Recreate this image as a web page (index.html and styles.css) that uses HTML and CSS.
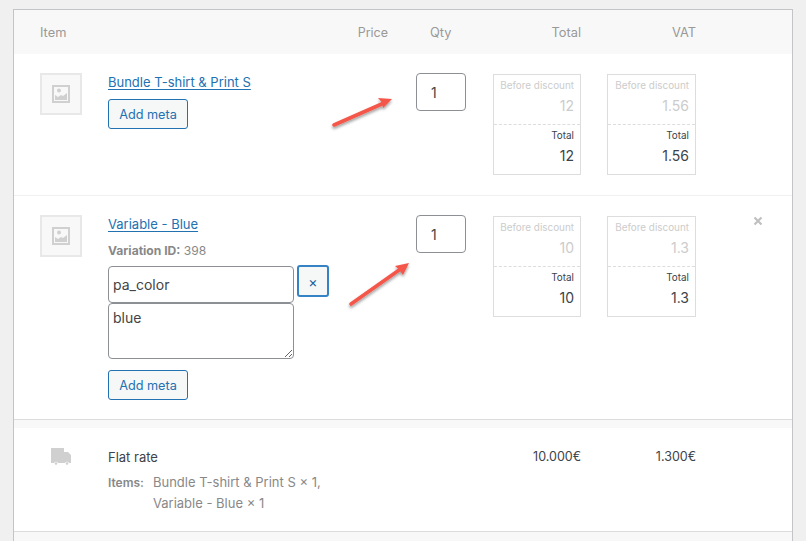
FILE: index.html
```html
<!DOCTYPE html>
<html lang="en">
<head>
<meta charset="utf-8">
<title>Order items</title>
<link rel="stylesheet" href="styles.css">
</head>
<body>
<div class="panel">
  <div class="grid head">
    <div class="col-item">Item</div>
    <div class="col-price">Price</div>
    <div class="col-qty-head">Qty</div>
    <div class="col-num">Total</div>
    <div class="col-num">VAT</div>
  </div>

  <div class="grid row row-one">
    <div class="thumb-cell"><div class="thumb"><svg class="thumb-icon" viewBox="0 0 20 20"><path fill-rule="evenodd" d="M1 1h18v18H1z M3 3v14h14V3z"/><path d="M4 16v-5l3 2 3-2 2 1 4-3v7z"/><circle cx="8" cy="6.5" r="2"/></svg></div></div>
    <div class="name-cell">
      <a class="item-link" href="#">Bundle T-shirt &amp; Print S</a>
      <button class="btn add-meta" type="button">Add meta</button>
    </div>
    <div></div>
    <div class="qty-cell"><input class="qty" type="text" value="1"></div>
    <div class="col-num">
      <div class="split">
        <div class="half muted"><span class="label">Before discount</span><span class="value">12</span></div>
        <div class="half"><span class="label">Total</span><span class="value">12</span></div>
      </div>
    </div>
    <div class="col-num">
      <div class="split split-wide">
        <div class="half muted"><span class="label">Before discount</span><span class="value">1.56</span></div>
        <div class="half"><span class="label">Total</span><span class="value">1.56</span></div>
      </div>
    </div>
  </div>

  <div class="grid row row-two">
    <div class="thumb-cell"><div class="thumb"><svg class="thumb-icon" viewBox="0 0 20 20"><path fill-rule="evenodd" d="M1 1h18v18H1z M3 3v14h14V3z"/><path d="M4 16v-5l3 2 3-2 2 1 4-3v7z"/><circle cx="8" cy="6.5" r="2"/></svg></div></div>
    <div class="name-cell">
      <a class="item-link" href="#">Variable - Blue</a>
      <div class="variation"><b>Variation ID:</b> 398</div>
      <div class="meta-row">
        <div class="meta-fields">
          <input class="meta-key" type="text" value="pa_color">
          <textarea class="meta-value">blue</textarea>
        </div>
        <button class="btn remove-meta" type="button">×</button>
      </div>
      <button class="btn add-meta add-meta-two" type="button">Add meta</button>
    </div>
    <div></div>
    <div class="qty-cell"><input class="qty" type="text" value="1"></div>
    <div class="col-num">
      <div class="split">
        <div class="half muted"><span class="label">Before discount</span><span class="value">10</span></div>
        <div class="half"><span class="label">Total</span><span class="value">10</span></div>
      </div>
    </div>
    <div class="col-num">
      <div class="split split-wide">
        <div class="half muted"><span class="label">Before discount</span><span class="value">1.3</span></div>
        <div class="half"><span class="label">Total</span><span class="value">1.3</span></div>
      </div>
    </div>
    <div class="del-cell"><svg class="del" viewBox="0 0 10 10"><path d="M1.5 1.5l7 7M8.5 1.5l-7 7"/></svg></div>
  </div>

  <div class="band"></div>

  <div class="grid row row-ship">
    <div class="truck-cell"><svg class="truck" viewBox="0 0 20 17"><path d="M0 0h13v4h4l3 3v8h-2a2.200 2.200 0 0 0-4 0H7a2.200 2.200 0 0 0-4 0H0z"/><circle cx="5" cy="15.500" r="1.300"/><circle cx="16" cy="15.500" r="1.300"/></svg></div>
    <div class="ship-cell">
      <div class="ship-name">Flat rate</div>
      <div class="ship-items"><b>Items:</b><span>Bundle T-shirt &amp; Print S × 1,<br>Variable - Blue × 1</span></div>
    </div>
    <div></div>
    <div></div>
    <div class="col-num ship-total">10.000€</div>
    <div class="col-num ship-total">1.300€</div>
  </div>

  <div class="band band-end"></div>
</div>

<svg class="arrows" viewBox="0 0 806 541">
  <defs>
    <filter id="shade" x="-30%" y="-30%" width="160%" height="180%"><feDropShadow dx="0" dy="2" stdDeviation="1.500" flood-color="#000" flood-opacity=".4"/></filter>
  </defs>
  <g filter="url(#shade)">
    <path class="arrow-line" d="M334 125L384 103"/>
    <path class="arrow-head" d="M392 99L378 98L382 102.500L383 108z"/>
    <path class="arrow-line" d="M351 304L402 268"/>
    <path class="arrow-head" d="M409 263L395 266L399 269.500L403 275z"/>
  </g>
</svg>
</body>
</html>
```

FILE: styles.css
```css
* { box-sizing: border-box; }
html, body { height: 100%; }
body {
  margin: 0;
  padding: 9px 13px 0;
  background: #f0f0f1;
  overflow: hidden;
  font-family: Inter, "Liberation Sans", sans-serif;
  font-size: 13px;
  color: #3c434a;
}
.panel {
  width: 780px;
  height: 532px;
  background: #fff;
  border: 1px solid #c3c4c7;
  border-bottom: 0;
  overflow: hidden;
}
.grid {
  display: grid;
  grid-template-columns: 94px 210px 70px 93px 100px 115px 96px;
  align-items: start;
}
.head {
  height: 44px;
  background: #f8f8f8;
  align-items: center;
  color: #999;
  font-size: 12.800px;
}
.col-item { padding-left: 26px; grid-column: 1 / 3; }
.col-price { text-align: right; font-size: 12.500px; }
.col-qty-head { padding-left: 42px; }
.col-num { text-align: right; }
.row { border-bottom: 1px solid #f0f0f1; }
.row-one { height: 142px; padding-top: 19px; }
.row-two { height: 224px; padding-top: 19px; border-bottom-color: #dcdcde; }
.row-ship { height: 104px; padding-top: 20px; border-bottom-color: #dcdcde; }
.thumb-cell { padding-left: 26px; }
.thumb {
  width: 42px;
  height: 42px;
  border: 2px solid #e8e8e8;
  background: #f8f8f8;
  display: flex;
  align-items: center;
  justify-content: center;
}
.thumb-icon { width: 20px; height: 20px; fill: #d0d0d0; }
.name-cell { grid-column: 2 / 3; display: flex; flex-direction: column; align-items: flex-start; }
.item-link { color: #2271b1; line-height: 18px; margin-bottom: 8px; white-space: nowrap; text-decoration-thickness: 1px; text-underline-offset: 2px; }
.btn {
  font-family: inherit;
  font-size: 12.700px;
  color: #2271b1;
  background: #f6f7f7;
  border: 1px solid #2271b1;
  border-radius: 3px;
  cursor: pointer;
  padding: 0;
}
.add-meta { width: 80px; height: 30px; }
.add-meta-two { margin-top: 11px; }
.variation { color: #888; font-size: 12.100px; line-height: 16px; margin-top: 2px; margin-bottom: 7px; white-space: nowrap; }
.meta-row { display: flex; gap: 3px; align-items: flex-start; }
.meta-fields { display: flex; flex-direction: column; width: 186px; }
.meta-key, .meta-value, .qty {
  font-family: inherit;
  font-size: 14px;
  color: #444;
  background: #fff;
  border: 1px solid #8c8f94;
  border-radius: 4px;
  outline: 0;
  margin: 0;
}
.meta-key { height: 37px; padding: 0 4px; width: 100%; }
.meta-value { height: 56px; padding: 5px 4px; width: 100%; display: block; resize: vertical; }
.remove-meta { width: 32px; height: 32px; margin-top: -1px; border: 2px solid #3582c4; color: #135e96; font-size: 14px; }
.qty-cell { padding-left: 28px; }
.qty { width: 50px; height: 38px; padding: 0 14px; }
.split {
  margin-left: 12px;
  margin-top: 1px;
  width: 88px;
  height: 101px;
  border: 1px solid #ddd;
  text-align: right;
  color: #3c434a;
}
.split-wide { margin-left: 26px; width: 89px; }
.half { height: 49px; padding: 4px 6px 0; }
.half + .half { border-top: 1px dashed #ddd; height: 50px; }
.label { display: block; font-size: 9.900px; line-height: 12px; white-space: nowrap; }
.value { display: block; font-size: 14px; line-height: 18px; margin-top: 6px; }
.muted { color: #ccc; }
.del-cell { padding-left: 57px; padding-top: 1px; }
.del { width: 10px; height: 10px; display: block; fill: none; stroke: #c0c0c0; stroke-width: 2.200; }
.band { height: 8px; background: #f8f8f8; }
.band-end { height: 20px; }
.truck-cell { padding-left: 37px; }
.truck { width: 20px; height: 17px; display: block; fill: #d0d0d0; }
.ship-cell { grid-column: 2 / 3; }
.ship-name { line-height: 18px; margin-bottom: 6px; white-space: nowrap; }
.ship-items { display: flex; gap: 9px; color: #888; line-height: 21px; white-space: nowrap; }
.ship-items b { font-size: 12px; font-weight: 600; }
.ship-total { line-height: 18px; font-size: 12.500px; }
.arrows { position: absolute; left: 0; top: 0; width: 806px; height: 541px; pointer-events: none; }
.arrow-line { fill: none; stroke: #f4574a; stroke-width: 3.600; stroke-linecap: round; }
.arrow-head { fill: #f4574a; }
```
